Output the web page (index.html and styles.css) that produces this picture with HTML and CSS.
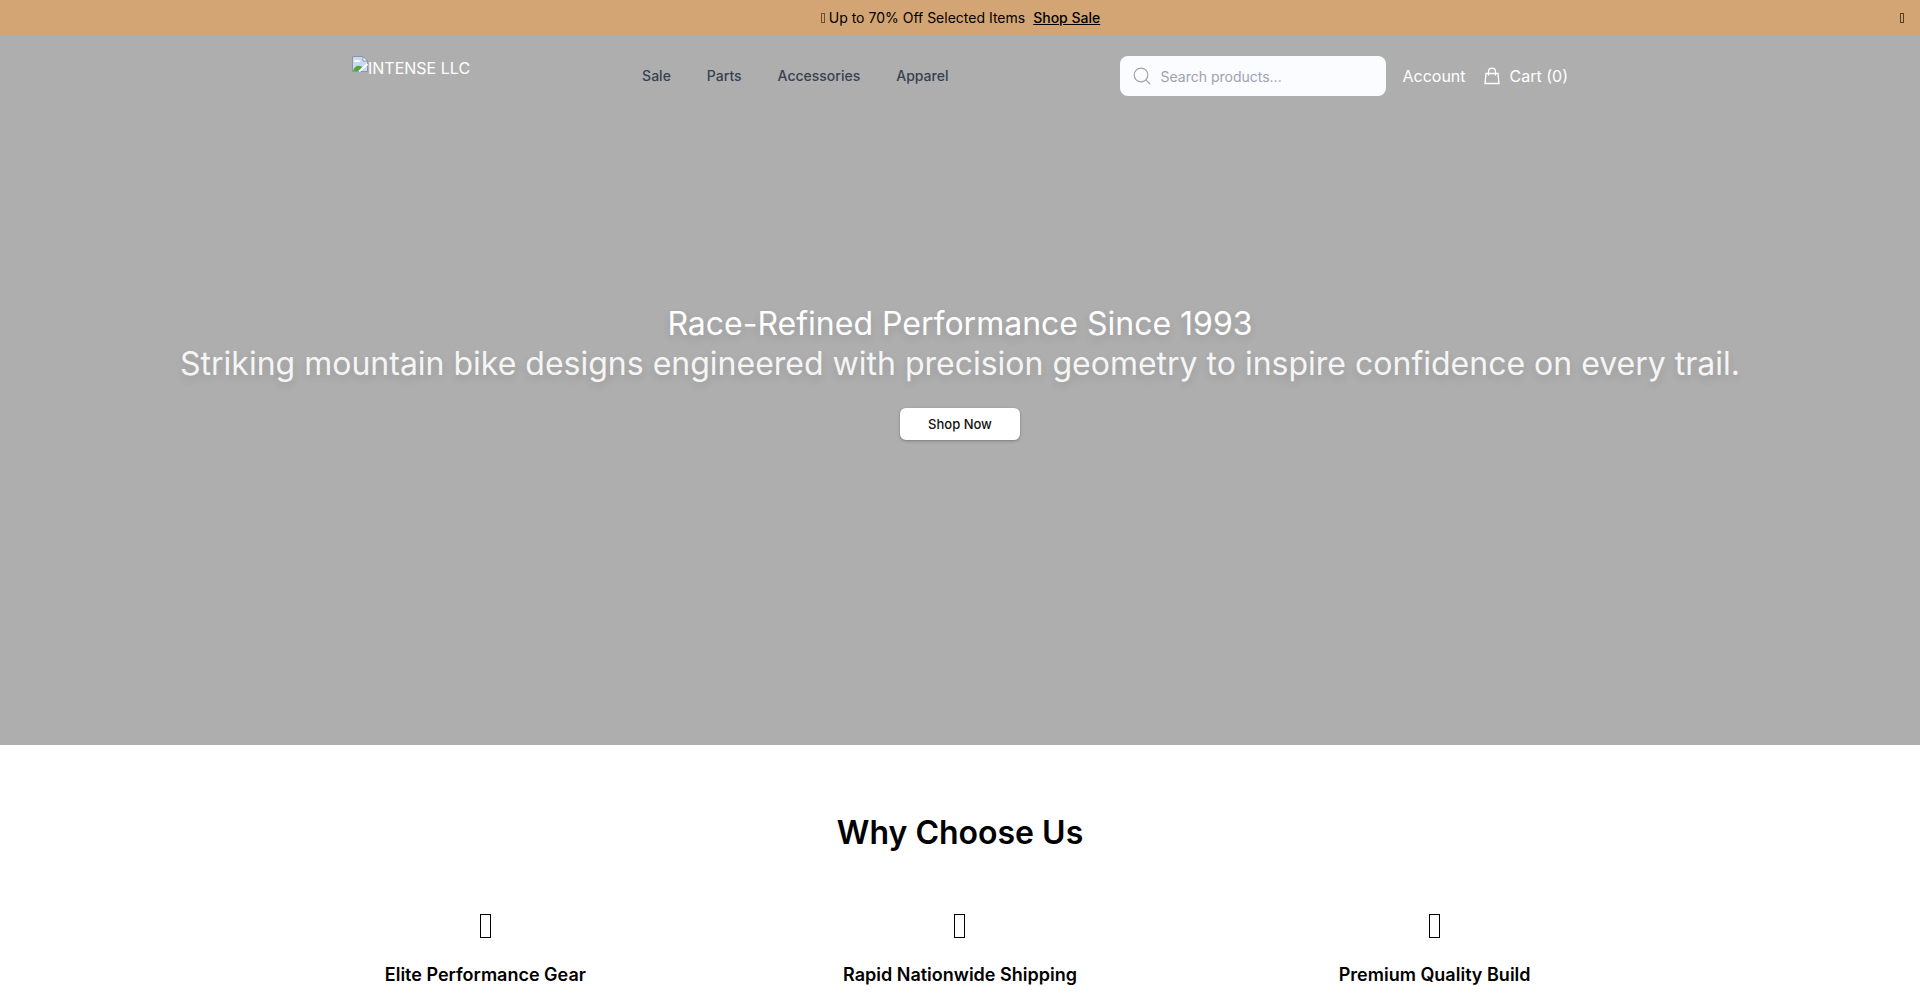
FILE: index.html
```html
<!DOCTYPE html>
<html lang="en">
<head>
    <meta charset="UTF-8">
    <meta name="viewport" content="width=device-width, initial-scale=1.0">
    <title>INTENSE LLC</title>
    <link rel="stylesheet" href="styles.css">
</head>
<body>
    <div class="top">
        <div class="banner">
            <p class="banner-text">
                <span class="glyph"></span>
                <span>Up to 70% Off Selected Items</span>
                <a href="#sale">Shop Sale</a>
            </p>
            <button class="banner-close" type="button" aria-label="Close"><span class="glyph glyph-close"></span></button>
        </div>

        <header class="header">
            <a class="logo" href="#">
                <svg width="16" height="16" viewBox="0 0 16 16" aria-hidden="true">
                    <path d="M0.5 0.5H11L15.5 5V15.5H0.5Z" fill="#c6d9f5" stroke="#8f959c"/>
                    <path d="M2 6a2 2 0 0 1 3-2 2 2 0 0 1 3 2Z" fill="#fff"/>
                    <path d="M1 15c1-4 4-6 7-5l3 1-4 4Z" fill="#4fa83d"/>
                    <path d="M11 0.5V5H15.5Z" fill="#fff" stroke="#8f959c"/>
                    <path d="M9 15L15 9V15Z" fill="#c6d9f5"/>
                    <path d="M7 15.5L15.5 8" stroke="#fff" stroke-width="2"/>
                </svg>
                <span>INTENSE LLC</span>
            </a>
            <nav class="nav">
                <a href="#sale">Sale</a>
                <a href="#parts">Parts</a>
                <a href="#accessories">Accessories</a>
                <a href="#apparel">Apparel</a>
            </nav>
            <div class="actions">
                <form class="search">
                    <svg width="18" height="18" viewBox="0 0 18 18" fill="none" stroke="currentColor" stroke-width="1.2" aria-hidden="true">
                        <circle cx="8" cy="8" r="6.8"/>
                        <path d="M12.8 12.8L17 17"/>
                    </svg>
                    <input type="search" aria-label="Search products" placeholder="Search products...">
                </form>
                <a href="#account">Account</a>
                <a class="cart" href="#cart">
                    <svg width="20" height="20" viewBox="0 0 20 20" fill="none" stroke="currentColor" stroke-width="1.3" aria-hidden="true">
                        <path d="M4 7.5H16L17 17.5H3Z"/>
                        <path d="M6.5 9.5V6C6.5 3.500 8 2.200 10 2.200S13.500 3.500 13.500 6V9.500"/>
                    </svg>
                    <span>Cart (0)</span>
                </a>
            </div>
        </header>

        <section class="hero">
            <h1>Race-Refined Performance Since 1993</h1>
            <p>Striking mountain bike designs engineered with precision geometry to inspire confidence on every trail.</p>
            <button class="shop-now" type="button">Shop Now</button>
        </section>
    </div>

    <section class="features">
        <h2>Why Choose Us</h2>
        <div class="feature-grid">
            <div class="feature">
                <span class="glyph glyph-large"></span>
                <h3>Elite Performance Gear</h3>
            </div>
            <div class="feature">
                <span class="glyph glyph-large"></span>
                <h3>Rapid Nationwide Shipping</h3>
            </div>
            <div class="feature">
                <span class="glyph glyph-large"></span>
                <h3>Premium Quality Build</h3>
            </div>
        </div>
    </section>
</body>
</html>
```
FILE: styles.css
```css
* {
    box-sizing: border-box;
}
html {
    scrollbar-width: none;
}
body {
    font-family: Inter, Arial, sans-serif;
    font-size: 16px;
    line-height: 24px;
    margin: 0;
    color: #000;
    background-color: #fff;
}
h1, h2, h3, p {
    margin: 0;
}
a {
    color: inherit;
    text-decoration: none;
}
.top {
    display: flex;
    flex-direction: column;
    min-height: 75vh;
    background-color: #aeaeae;
}
.banner {
    display: flex;
    align-items: center;
    height: 36px;
    padding: 0 16px;
    background-color: #d4a574;
    font-size: 14px;
}
.banner-text {
    display: flex;
    flex: 1;
    align-items: center;
    justify-content: center;
    gap: 4px;
    padding-left: 5px;
}
.banner-text a {
    margin-left: 4px;
    font-weight: 500;
    text-decoration: underline;
}
.banner-close {
    display: flex;
    border: none;
    padding: 0;
    background: none;
    cursor: pointer;
}
/* empty box symbols */
.glyph {
    display: inline-block;
    width: 4px;
    height: 10px;
    border: 1px solid #6f4d2c;
}
.glyph-close {
    border-color: #5c3f22;
}
.glyph-large {
    width: 11px;
    height: 24px;
    border-color: #000;
}
.header {
    display: flex;
    align-items: center;
    justify-content: space-between;
    width: 100%;
    max-width: 1280px;
    margin: 0 auto;
    padding: 20px 32px;
    color: #fff;
}
.logo {
    display: flex;
    align-items: flex-start;
    height: 40px;
}
.nav {
    display: flex;
    gap: 36px;
    color: #374151;
    font-size: 14px;
    font-weight: 500;
}
.actions {
    display: flex;
    align-items: center;
    gap: 16px;
}
.search {
    display: flex;
    align-items: center;
    gap: 9px;
    width: 266px;
    height: 40px;
    padding: 0 13px;
    border-radius: 8px;
    background-color: #fafcff;
    color: #9ca3af;
}
.search input {
    flex: 1;
    min-width: 0;
    height: 18px;
    border: none;
    padding: 0;
    outline: none;
    background: none;
    color: #374151;
    font-family: inherit;
    font-size: 14px;
}
.search input::placeholder {
    color: #9ca3af;
}
.cart {
    display: flex;
    align-items: center;
    gap: 8px;
}
.hero {
    display: flex;
    flex: 1;
    flex-direction: column;
    align-items: center;
    justify-content: center;
    padding-bottom: 116px;
    color: #fff;
    font-size: 32px;
    line-height: 40px;
    text-align: center;
    text-shadow: 0 4px 8px rgba(0, 0, 0, 0.12);
}
.hero h1 {
    font-size: 32px;
    font-weight: 400;
}
.hero p {
    color: #f5f5f5;
}
.shop-now {
    width: 120px;
    height: 32px;
    margin-top: 24px;
    border: none;
    border-radius: 6px;
    background-color: #fff;
    box-shadow: 0 1px 3px rgba(0, 0, 0, 0.3);
    color: #111;
    font-family: inherit;
    font-size: 13px;
    font-weight: 500;
    cursor: pointer;
}
.features {
    max-width: 1400px;
    margin: 0 auto;
    padding: 64px 0;
    text-align: center;
}
.features h2 {
    margin-bottom: 48px;
    font-size: 32px;
    font-weight: 600;
    line-height: 48px;
}
.feature-grid {
    display: grid;
    grid-template-columns: repeat(3, 1fr);
    gap: 24px;
}
.feature {
    display: flex;
    flex-direction: column;
    align-items: center;
    gap: 23px;
    padding-top: 9px;
}
.feature h3 {
    font-size: 18px;
    font-weight: 600;
    line-height: 28px;
}
```
